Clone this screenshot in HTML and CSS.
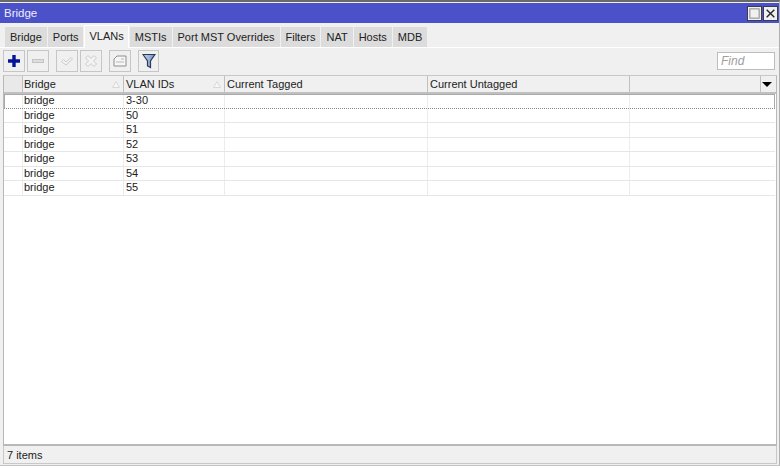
FILE: index.html
```html
<!DOCTYPE html>
<html lang="en">
<head>
<meta charset="utf-8">
<title>Bridge</title>
<link rel="stylesheet" href="styles.css">
</head>
<body>
<div class="window">
  <div class="titlebar">
    <span class="title">Bridge</span>
    <div class="winbtns">
      <span class="winbtn"><svg width="13" height="13" viewBox="0 0 13 13"><rect x="1" y="1" width="11" height="11" fill="none" stroke="#8a8a8a" stroke-width="1.2"/></svg></span>
      <span class="winbtn"><svg width="13" height="13" viewBox="0 0 13 13"><path d="M2 2l9 9M11 2l-9 9" stroke="#222" stroke-width="1.6"/></svg></span>
    </div>
  </div>
  <div class="tabs">
    <span class="tab">Bridge</span>
    <span class="tab">Ports</span>
    <span class="tab active">VLANs</span>
    <span class="tab">MSTIs</span>
    <span class="tab">Port MST Overrides</span>
    <span class="tab">Filters</span>
    <span class="tab">NAT</span>
    <span class="tab">Hosts</span>
    <span class="tab">MDB</span>
  </div>
  <div class="toolbar">
    <span class="tool"><svg width="14" height="14" viewBox="0 0 14 14"><path d="M7 1v12M1 7h12" stroke="#06149a" stroke-width="3.4"/></svg></span>
    <span class="tool"><svg width="14" height="14" viewBox="0 0 14 14"><rect x="1.5" y="5.500" width="11" height="3" fill="#dedede" stroke="#c4c4c4"/></svg></span>
    <span class="tool gap"><svg width="14" height="14" viewBox="0 0 14 14"><path d="M1.500 7.500l2-2 2.500 2.500 5-4.500 1.500 1.500-6.500 6z" fill="#f4f4f4" stroke="#cacaca"/></svg></span>
    <span class="tool"><svg width="14" height="14" viewBox="0 0 14 14"><path d="M4 1.500l3 3 3-3 2.500 2.500-3 3 3 3-2.500 2.500-3-3-3 3-2.500-2.500 3-3-3-3z" fill="#f4f4f4" stroke="#cacaca"/></svg></span>
    <span class="tool gap"><svg width="14" height="14" viewBox="0 0 14 14"><path d="M1 12V5l3-3h9v10z" fill="#f6f6f6" stroke="#8e8e8e"/><path d="M8 5h3M3 8h8" stroke="#b8b8b8"/></svg></span>
    <span class="tool gap"><svg width="14" height="16" viewBox="0 0 14 16"><defs><linearGradient id="funnel" x1="0" y1="0" x2="1" y2="0"><stop offset="0" stop-color="#c9d6ee"/><stop offset="1" stop-color="#6f8ec4"/></linearGradient></defs><path d="M1 1.500h12L8.500 8v6.500l-3-1.500V8z" fill="url(#funnel)" stroke="#2b3a55" stroke-width="1.200"/></svg></span>
    <input class="find" placeholder="Find" aria-label="Find">
  </div>
  <div class="table">
    <div class="row head">
      <span class="cell c0"></span>
      <span class="cell c1">Bridge<svg class="sort" width="8" height="7" viewBox="0 0 8 7"><path d="M4 .5L7.500 6.500H.5z" fill="#f6f6f6" stroke="#d8d8d8"/></svg></span>
      <span class="cell c2">VLAN IDs<svg class="sort" width="8" height="7" viewBox="0 0 8 7"><path d="M4 .5L7.500 6.500H.5z" fill="#f6f6f6" stroke="#d8d8d8"/></svg></span>
      <span class="cell c3">Current Tagged</span>
      <span class="cell c4">Current Untagged</span>
      <span class="cell c5"></span>
      <span class="cell c6"><i class="drop"></i></span>
    </div>
    <div class="row sel"><span class="cell c0"></span><span class="cell c1">bridge</span><span class="cell c2">3-30</span><span class="cell c3"></span><span class="cell c4"></span><span class="cell c5"></span></div>
    <div class="row"><span class="cell c0"></span><span class="cell c1">bridge</span><span class="cell c2">50</span><span class="cell c3"></span><span class="cell c4"></span><span class="cell c5"></span></div>
    <div class="row"><span class="cell c0"></span><span class="cell c1">bridge</span><span class="cell c2">51</span><span class="cell c3"></span><span class="cell c4"></span><span class="cell c5"></span></div>
    <div class="row"><span class="cell c0"></span><span class="cell c1">bridge</span><span class="cell c2">52</span><span class="cell c3"></span><span class="cell c4"></span><span class="cell c5"></span></div>
    <div class="row"><span class="cell c0"></span><span class="cell c1">bridge</span><span class="cell c2">53</span><span class="cell c3"></span><span class="cell c4"></span><span class="cell c5"></span></div>
    <div class="row"><span class="cell c0"></span><span class="cell c1">bridge</span><span class="cell c2">54</span><span class="cell c3"></span><span class="cell c4"></span><span class="cell c5"></span></div>
    <div class="row"><span class="cell c0"></span><span class="cell c1">bridge</span><span class="cell c2">55</span><span class="cell c3"></span><span class="cell c4"></span><span class="cell c5"></span></div>
  </div>
  <div class="status">7 items</div>
</div>
</body>
</html>
```
FILE: styles.css
```css
* { box-sizing: border-box; }
html, body { margin: 0; height: 100%; background: #fff; }
body { font-family: "Liberation Sans", Arial, sans-serif; font-size: 11px; color: #222; overflow: hidden; }
.window { width: 780px; height: 466px; display: flex; flex-direction: column; background: #f0f0f0; border-top: 2px solid #6a6a6a; border-right: 1px solid #b0b0b0; border-bottom: 1px solid #c4c4c4; }
.titlebar { height: 20px; margin-top: 1px; background: #4b51c9; display: flex; align-items: center; justify-content: space-between; padding: 0 1px 0 4px; flex: none; }
.title { color: #eeeef8; font-size: 11.500px; }
.winbtns { display: flex; gap: 1px; }
.winbtn { width: 15px; height: 15px; background: #f0f0f0; border: 1px solid #3a3a50; display: flex; align-items: center; justify-content: center; }
.winbtn svg { width: 11px; height: 11px; }
.tabs { height: 24px; flex: none; display: flex; align-items: flex-end; padding: 3px 0 0 5px; gap: 1px; }
.tab { height: 20px; padding: 0 5px; line-height: 20px; background: #dcdcdc; font-size: 11px; white-space: nowrap; }
.tab.active { background: #f0f0f0; height: 23px; line-height: 21px; border: 1px solid #fff; border-bottom: 0; padding: 0 4px; margin-bottom: -1px; position: relative; }
.toolbar { height: 28px; flex: none; display: flex; align-items: center; padding: 0 4px 1px 3px; gap: 2px; border-top: 1px solid #fff; }
.tool { width: 22px; height: 22px; flex: none; border: 1px solid #c6c6c6; background: #f0f0f0; display: flex; align-items: center; justify-content: center; }
.tool:last-of-type { margin-left: 4px; width: 21px; }
.tool.gap { margin-left: 5px; }
.find { width: 58px; height: 18px; margin-left: auto; border: 1px solid #bdbdbd; background: #fff; font: italic 12px "Liberation Sans", Arial, sans-serif; padding: 0 3px; }
.find::placeholder { color: #a0a0a0; opacity: 1; }
.table { flex: 1; margin: 0 2px 0 3px; background: #fff; border-left: 1px solid #b8b8b8; border-right: 1px solid #b8b8b8; border-top: 1px solid #c8c8c8; border-bottom: 2px solid #b8b8b8; min-height: 0; }
.row { display: flex; height: 14.500px; width: 771px; border-bottom: 1px solid #e6e6e6; }
.cell { flex: none; line-height: 13.500px; padding-left: 2px; border-right: 1px solid #ececec; white-space: nowrap; position: relative; font-size: 11px; color: #222; }
.c0 { width: 19px; padding-left: 0; }
.c1 { width: 101px; padding-left: 1px; }
.c2 { width: 101px; }
.c3 { width: 203px; }
.c4 { width: 202px; }
.c5 { width: 145px; border-right: 0; }
.c6 { width: 14px; border-right: 0; }
.head { height: 18px; width: auto; background: #f0f0f0; border-bottom: 2px solid #c0c0c0; }
.head .cell { line-height: 17px; border-right: 1px solid #c0c0c0; }
.head .c0 { background: #e9e9e9; }
.head .c5 { width: 131px; }
.head .c6 { border-right: 0; }
.sel { border: 1px solid #aaa; border-bottom: 1px dotted #888; }
.sel .cell { line-height: 11px; }
.sel .c0 { width: 18px; }
.sort { position: absolute; right: 3px; top: 5px; }
.drop { position: absolute; left: 1px; top: 6px; width: 0; height: 0; border-left: 5px solid transparent; border-right: 5px solid transparent; border-top: 5px solid #000; }
.status { height: 18px; flex: none; margin: 0 2px 1px 3px; padding-left: 3px; line-height: 18px; font-size: 11px; border-right: 1px solid #c8c8c8; border-left: 1px solid #c8c8c8; border-bottom: 1px solid #c8c8c8; }
```
